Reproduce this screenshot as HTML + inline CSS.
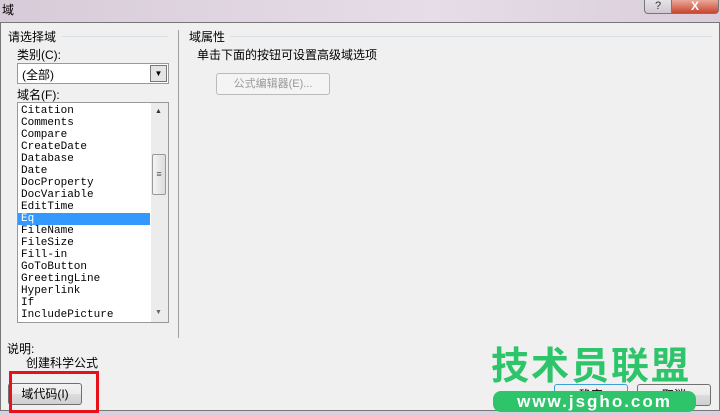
<!DOCTYPE html>
<html><head><meta charset="utf-8"><style>
body{margin:0;width:720px;height:416px;overflow:hidden;background:#dccfdd;font-family:"Liberation Sans","Noto Sans CJK SC",sans-serif;font-size:12px;color:#000;position:relative}
.a{position:absolute}
.list div{height:12px;line-height:12px;padding-left:3px;font-family:"Liberation Mono","Noto Sans CJK SC",monospace;font-size:11px;color:#000}
.btn{position:absolute;border:1px solid #707070;border-radius:3px;background:linear-gradient(#f2f2f2,#ebebeb 50%,#dddddd 51%,#cfcfcf);text-align:center;line-height:20px}
</style></head><body>
<div class="a" style="left:0;top:0;width:720px;height:22px;background:linear-gradient(90deg,#d8cbd9,#e6dde8 60%,#d9cdd9)"></div>
<div class="a" style="left:2px;top:1px;font-size:12px">域</div>
<div class="a" style="left:644px;top:0;width:26px;height:13px;border:1px solid #777;border-top:none;border-radius:0 0 0 4px;background:linear-gradient(#e6e2e8,#cfc8d2);text-align:center;font-size:11px;line-height:12px;color:#333">?</div>
<div class="a" style="left:671px;top:0;width:46px;height:13px;border:1px solid #777;border-top:none;border-radius:0 0 4px 0;background:linear-gradient(#e9a99a,#c9452f);text-align:center;color:#fff;font-weight:bold;line-height:12px">X</div>
<div class="a" style="left:0;top:22px;width:718px;height:387px;background:#f0f0f0;border:1px solid #777"></div>
<div class="a" style="left:8px;top:28px">请选择域</div>
<div class="a" style="left:62px;top:36px;width:106px;height:1px;background:#d5dfe5"></div>
<div class="a" style="left:189px;top:28px">域属性</div>
<div class="a" style="left:230px;top:36px;width:482px;height:1px;background:#d5dfe5"></div>
<div class="a" style="left:178px;top:30px;width:1px;height:308px;background:#a0a0a0"></div>
<div class="a" style="left:17px;top:46px">类别(C):</div>
<div class="a" style="left:17px;top:63px;width:150px;height:19px;border:1px solid #999;background:#fff"><span style="position:absolute;left:4px;top:2px">(全部)</span>
<div class="a" style="right:1px;top:1px;width:15px;height:15px;border:1px solid #777;background:#e4e4e4;text-align:center;font-size:8px;line-height:15px">▼</div></div>
<div class="a" style="left:17px;top:86px">域名(F):</div>
<div class="a" style="left:17px;top:102px;width:150px;height:219px;border:1px solid #999;background:#fff">
<div class="list" style="position:absolute;left:0;top:2px;width:132px">
<div>Citation</div><div>Comments</div><div>Compare</div><div>CreateDate</div><div>Database</div><div>Date</div><div>DocProperty</div><div>DocVariable</div><div>EditTime</div><div style="background:#3399ff;color:#fff">Eq</div><div>FileName</div><div>FileSize</div><div>Fill-in</div><div>GoToButton</div><div>GreetingLine</div><div>Hyperlink</div><div>If</div><div>IncludePicture</div></div>
<div class="a" style="left:133px;top:0;width:17px;height:219px;background:#ececec"></div>
<div class="a" style="left:137px;top:5px;font-size:7px;color:#333">▲</div>
<div class="a" style="left:137px;top:206px;font-size:7px;color:#666">▼</div>
<div class="a" style="left:134px;top:51px;width:12px;height:39px;border:1px solid #999;border-radius:2px;background:linear-gradient(90deg,#f4f4f4,#dcdcdc);font-size:9px;text-align:center;line-height:39px;color:#555">≡</div>
</div>
<div class="a" style="left:197px;top:46px">单击下面的按钮可设置高级域选项</div>
<div class="a" style="left:216px;top:73px;width:112px;height:20px;border:1px solid #bbb;border-radius:3px;background:#f4f4f4;color:#999;font-size:11px;text-align:center;line-height:20px">公式编辑器(E)...</div>
<div class="a" style="left:7px;top:340px">说明:</div>
<div class="a" style="left:26px;top:354px">创建科学公式</div>
<div class="btn" style="left:8px;top:383px;width:72px;height:20px">域代码(I)</div>
<div class="a" style="left:9px;top:371px;width:84px;height:36px;border:3px solid #e8101a"></div>
<div class="btn" style="left:554px;top:384px;width:72px;height:20px;border-color:#3c9fd8">确定</div>
<div class="btn" style="left:637px;top:384px;width:72px;height:20px">取消</div>
<div class="a" style="left:491px;top:345px;font-size:38px;font-weight:bold;color:#2ec46a;letter-spacing:2px;line-height:44px">技术员联盟</div>
<div class="a" style="left:493px;top:391px;width:203px;height:21px;border-radius:8px;background:#2ec46a;color:#fff;font-weight:bold;font-size:17px;line-height:21px;text-align:center;letter-spacing:2px">www.jsgho.com</div>
</body></html>
